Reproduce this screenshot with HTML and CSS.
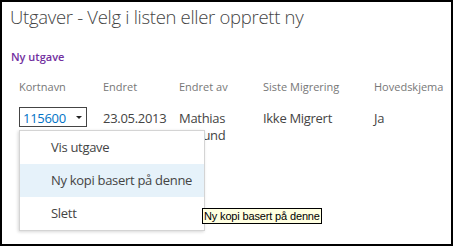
FILE: index.html
```html
<!DOCTYPE html>
<html lang="no">
<head>
<meta charset="utf-8">
<title>Utgaver</title>
<link rel="stylesheet" href="styles.css">
</head>
<body>
<div class="frame">
  <h1 class="title">Utgaver - Velg i listen eller opprett ny</h1>
  <a class="new-link" href="#">Ny utgave</a>
  <div class="table">
    <div class="row head">
      <div>Kortnavn</div>
      <div>Endret</div>
      <div>Endret av</div>
      <div>Siste Migrering</div>
      <div>Hovedskjema</div>
    </div>
    <div class="row data">
      <div class="cell cell-drop">
        <div class="dropdown"><span class="code">115600</span><span class="arrow"></span></div>
      </div>
      <div class="cell">23.05.2013</div>
      <div class="cell">Mathias Ekelund</div>
      <div class="cell">Ikke Migrert</div>
      <div class="cell">Ja</div>
    </div>
    <ul class="menu">
      <li>Vis utgave</li>
      <li class="hover">Ny kopi basert på denne</li>
      <li>Slett</li>
    </ul>
  </div>
  <div class="tooltip">Ny kopi basert på denne</div>
</div>
</body>
</html>
```
FILE: styles.css
```css
html, body {
  margin: 0;
  padding: 0;
  background: #fff;
}
.frame {
  position: relative;
  box-sizing: border-box;
  width: 453px;
  height: 246px;
  border: 2px solid #000;
  padding-left: 8px;
  font-family: "Open Sans", "Liberation Sans", sans-serif;
  color: #444;
  overflow: hidden;
}
.title {
  margin: 2px 0 0 0;
  font-size: 18.5px;
  font-weight: 300;
  letter-spacing: -0.3px;
  line-height: 26px;
  color: #444;
}
.new-link {
  display: block;
  margin-top: 19px;
  margin-left: 1px;
  font-size: 11px;
  line-height: 15px;
  font-weight: 600;
  color: #7230a0;
  text-decoration: none;
}
.table {
  position: relative;
  margin-top: 15px;
  margin-left: 9px;
}
.row {
  display: grid;
  grid-template-columns: 84px 76px 84px 111px auto;
}
.head {
  font-size: 11px;
  line-height: 15px;
  color: #777;
}
.data {
  margin-top: 13px;
  font-size: 13px;
  letter-spacing: -0.3px;
  line-height: 17px;
  color: #444;
}
.cell {
  padding-top: 3px;
  padding-right: 6px;
}
.cell-drop {
  padding-top: 0;
}
.dropdown {
  box-sizing: border-box;
  width: 68px;
  height: 20px;
  border: 1px solid #444;
  padding-left: 3px;
  line-height: 18px;
  display: flex;
  align-items: center;
}
.code {
  color: #0072c6;
  margin-top: 1px;
}
.arrow {
  margin-left: 10px;
  width: 0;
  height: 0;
  border-left: 3px solid transparent;
  border-right: 3px solid transparent;
  border-top: 3px solid #222;
  margin-top: 1px;
}
.menu {
  position: absolute;
  left: 0;
  top: 51px;
  z-index: 20;
  box-sizing: border-box;
  width: 186px;
  margin: 0;
  padding: 0;
  list-style: none;
  background: #fff;
  border: 1px solid #d4d4d4;
  box-shadow: -1px 1px 3px rgba(0, 0, 0, 0.16);
}
.menu li {
  height: 33px;
  line-height: 33px;
  padding-left: 31px;
  font-size: 13px;
  letter-spacing: -0.3px;
  color: #444;
}
.menu li.hover {
  background: #e6f2fa;
}
.tooltip {
  position: absolute;
  left: 200px;
  top: 206px;
  z-index: 30;
  box-sizing: border-box;
  height: 16px;
  padding: 0 1px;
  border: 1px solid #000;
  background: #ffffe1;
  color: #000;
  font-family: "Liberation Sans", Arial, sans-serif;
  font-size: 11px;
  letter-spacing: -0.15px;
  line-height: 14px;
}
```
